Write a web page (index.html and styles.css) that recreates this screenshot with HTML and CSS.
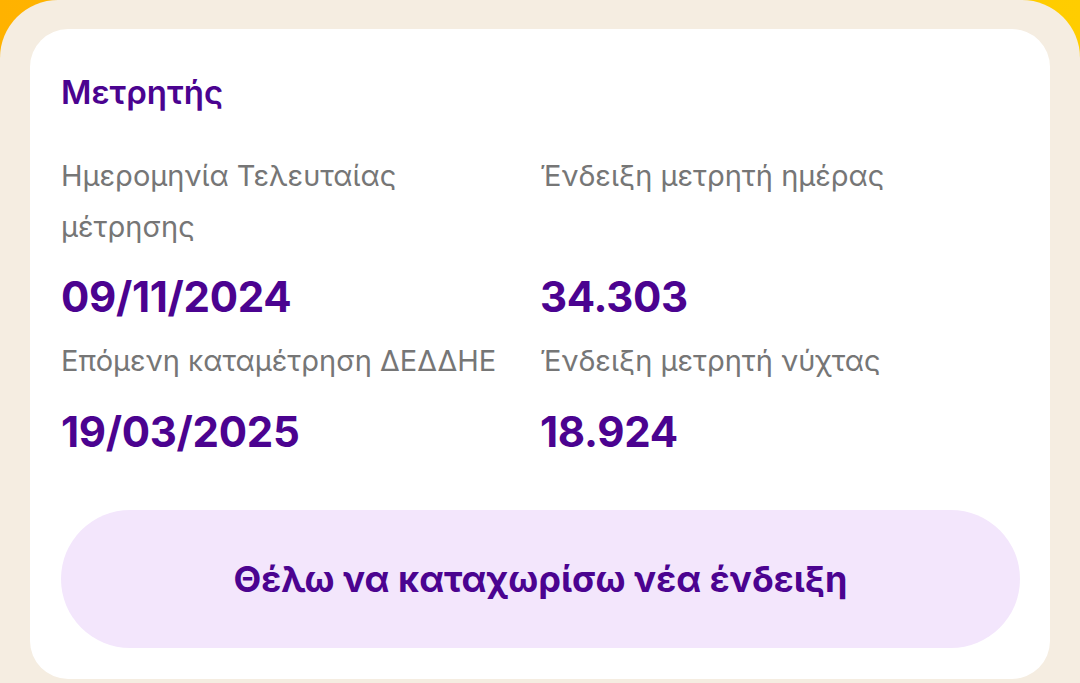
FILE: index.html
```html
<!DOCTYPE html>
<html lang="el">
<head>
<meta charset="utf-8">
<link rel="stylesheet" href="styles.css">
</head>
<body>
<div class="sheet">
  <section class="card">
    <h2 class="title">Μετρητής</h2>
    <div class="grid">
      <div class="label">Ημερομηνία Τελευταίας μέτρησης</div>
      <div class="label">Ένδειξη μετρητή ημέρας</div>
      <div class="value">09/11/2024</div>
      <div class="value">34.303</div>
      <div class="label row2">Επόμενη καταμέτρηση ΔΕΔΔΗΕ</div>
      <div class="label row2">Ένδειξη μετρητή νύχτας</div>
      <div class="value last">19/03/2025</div>
      <div class="value last">18.924</div>
    </div>
    <button class="cta">Θέλω να καταχωρίσω νέα ένδειξη</button>
  </section>
</div>
</body>
</html>
```
FILE: styles.css
```css
html, body {
  margin: 0;
  padding: 0;
}
body {
  width: 1080px;
  height: 683px;
  overflow: hidden;
  background: linear-gradient(90deg, #ffb200 0%, #ffc400 60%, #ffcd00 100%);
  font-family: "Inter", "Noto Sans", sans-serif;
}
.sheet {
  background: #f5ede1;
  border-radius: 58px 58px 0 0;
  padding: 29px 30px 4px 30px;
  height: 683px;
  box-sizing: border-box;
}
.card {
  background: #ffffff;
  border-radius: 38px;
  padding: 43px 30px 31px 31px;
  display: flex;
  flex-direction: column;
}
.title {
  margin: 0;
  font-size: 33px;
  line-height: 40px;
  font-weight: 600;
  color: #4b0390;
}
.grid {
  margin-top: 38px;
  display: grid;
  grid-template-columns: 479px 1fr;
}
.label {
  font-size: 29px;
  line-height: 51px;
  color: #767676;
  font-weight: 400;
  padding-right: 25px;
}
.label.row2 {
  margin-top: 10px;
}
.value {
  margin-top: 17px;
  font-size: 42px;
  line-height: 56px;
  font-weight: 700;
  letter-spacing: -0.3px;
  color: #4b0390;
}
.value.last {
  margin-top: 18px;
}
.cta {
  margin-top: 50px;
  height: 138px;
  border: none;
  border-radius: 69px;
  background: #f3e6fc;
  color: #4b0390;
  font-family: inherit;
  font-size: 36px;
  font-weight: 700;
  cursor: pointer;
}
```
